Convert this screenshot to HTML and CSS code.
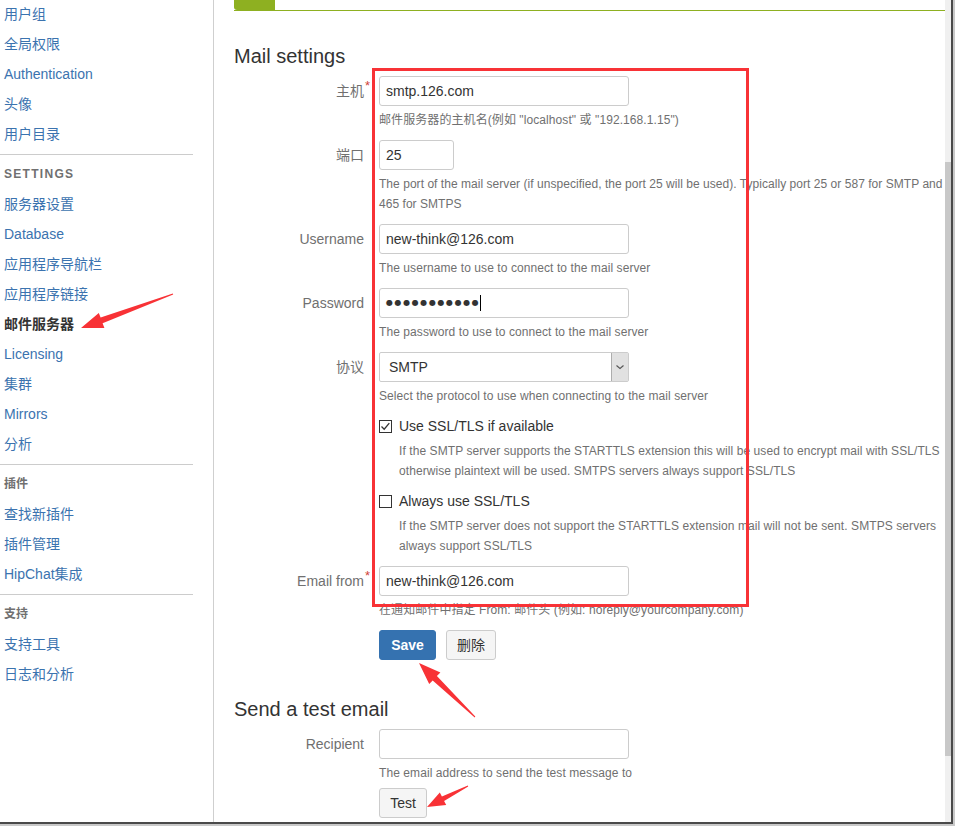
FILE: index.html
```html
<!DOCTYPE html>
<html lang="zh">
<head>
<meta charset="utf-8">
<title>Mail settings</title>
<link rel="stylesheet" href="styles.css">
</head>
<body>
<div class="shot">
  <div class="page">
    <nav class="sidebar">
      <ul class="nav first">
        <li><a class="nav-link">用户组</a></li>
        <li><a class="nav-link">全局权限</a></li>
        <li><a class="nav-link">Authentication</a></li>
        <li><a class="nav-link">头像</a></li>
        <li><a class="nav-link">用户目录</a></li>
      </ul>
      <div class="divider"></div>
      <div class="nav-heading caps">SETTINGS</div>
      <ul class="nav">
        <li><a class="nav-link">服务器设置</a></li>
        <li><a class="nav-link">Database</a></li>
        <li><a class="nav-link">应用程序导航栏</a></li>
        <li><a class="nav-link">应用程序链接</a></li>
        <li><a class="nav-link active">邮件服务器</a></li>
        <li><a class="nav-link">Licensing</a></li>
        <li><a class="nav-link">集群</a></li>
        <li><a class="nav-link">Mirrors</a></li>
        <li><a class="nav-link">分析</a></li>
      </ul>
      <div class="divider"></div>
      <div class="nav-heading">插件</div>
      <ul class="nav">
        <li><a class="nav-link">查找新插件</a></li>
        <li><a class="nav-link">插件管理</a></li>
        <li><a class="nav-link">HipChat集成</a></li>
      </ul>
      <div class="divider"></div>
      <div class="nav-heading">支持</div>
      <ul class="nav">
        <li><a class="nav-link">支持工具</a></li>
        <li><a class="nav-link">日志和分析</a></li>
      </ul>
    </nav>

    <main class="main">
      <div class="tabbar"><span class="tab"></span></div>
      <h2 class="section-title">Mail settings</h2>

      <div class="field">
        <label class="label">主机<span class="req">*</span></label>
        <div class="control">
          <div class="text">smtp.126.com</div>
          <div class="desc">邮件服务器的主机名(例如 "localhost" 或 "192.168.1.15")</div>
        </div>
      </div>

      <div class="field">
        <label class="label">端口</label>
        <div class="control">
          <div class="text short">25</div>
          <div class="desc nowrap long">The port of the mail server (if unspecified, the port 25 will be used). Typically port 25 or 587 for SMTP and<br>465 for SMTPS</div>
        </div>
      </div>

      <div class="field">
        <label class="label">Username</label>
        <div class="control">
          <div class="text">new-think@126.com</div>
          <div class="desc">The username to use to connect to the mail server</div>
        </div>
      </div>

      <div class="field">
        <label class="label">Password</label>
        <div class="control">
          <div class="text password"><span class="dots">●●●●●●●●●●●</span><span class="caret"></span></div>
          <div class="desc">The password to use to connect to the mail server</div>
        </div>
      </div>

      <div class="field">
        <label class="label">协议</label>
        <div class="control">
          <div class="select">
            <span class="select-value">SMTP</span>
            <span class="select-arrow">
              <svg width="16" height="28" viewBox="0 0 16 28"><path d="M4.5 12.5 L8 15.5 L11.5 12.5" fill="none" stroke="#555" stroke-width="1.1"/></svg>
            </span>
          </div>
          <div class="desc">Select the protocol to use when connecting to the mail server</div>
        </div>
      </div>

      <div class="check-group">
        <div class="check-line">
          <span class="checkbox"><svg width="13" height="13" viewBox="0 0 13 13"><path d="M2.5 6.5 L5.2 9.2 L10.3 3.2" fill="none" stroke="#333" stroke-width="1.3"/></svg></span>
          <span class="check-label">Use SSL/TLS if available</span>
        </div>
        <div class="check-desc nowrap">If the SMTP server supports the STARTTLS extension this will be used to encrypt mail with SSL/TLS<br>otherwise plaintext will be used. SMTPS servers always support SSL/TLS</div>
      </div>

      <div class="check-group">
        <div class="check-line">
          <span class="checkbox"></span>
          <span class="check-label">Always use SSL/TLS</span>
        </div>
        <div class="check-desc nowrap">If the SMTP server does not support the STARTTLS extension mail will not be sent. SMTPS servers<br>always support SSL/TLS</div>
      </div>

      <div class="field">
        <label class="label">Email from<span class="req">*</span></label>
        <div class="control">
          <div class="text">new-think@126.com</div>
          <div class="desc">在通知邮件中指定 From: 邮件头 (例如: noreply@yourcompany.com)</div>
        </div>
      </div>

      <div class="buttons">
        <button class="btn primary">Save</button>
        <button class="btn">删除</button>
      </div>

      <h2 class="section-title second">Send a test email</h2>

      <div class="field tight">
        <label class="label">Recipient</label>
        <div class="control">
          <div class="text"></div>
          <div class="desc">The email address to send the test message to</div>
        </div>
      </div>

      <div class="buttons">
        <button class="btn test">Test</button>
      </div>
    </main>

    <div class="scrollbar"><div class="thumb"></div></div>
  </div>

  <svg class="annotations" width="955" height="826" viewBox="0 0 955 826">
    <rect x="373.5" y="69.5" width="374" height="536" fill="none" stroke="#f83236" stroke-width="3"/>
    <polygon fill="#f83236" points="172.8,293.5 100.6,317.6 98.8,312.9 81,328 104.4,327.9 102.6,323.2 173.2,294.5"/>
    <polygon fill="#f83236" points="475.3,716.6 436.9,676.1 440.4,672.5 419,663 429.2,684.1 432.7,680.5 474.7,717.4"/>
    <polygon fill="#f83236" points="467.8,785.6 441.9,796.6 439.8,792.6 427,807 446.2,805 444.1,801 468.2,786.4"/>
  </svg>
</div>
</body>
</html>
```

FILE: styles.css
```css
html, body {
  margin: 0;
  padding: 0;
  overflow: hidden;
  background: #d9d9d9;
}

body {
  font-family: "Liberation Sans", Arial, "Noto Sans CJK SC", sans-serif;
  font-size: 14px;
  color: #333;
}

.shot {
  position: relative;
  width: 955px;
  height: 826px;
  background: #c9c9c9;
}

.page {
  display: flex;
  width: 953px;
  height: 824px;
  box-sizing: border-box;
  border-right: 2px solid #4a4a4a;
  border-bottom: 2px solid #4a4a4a;
  background: #fff;
  overflow: hidden;
}

/* Sidebar */
.sidebar {
  flex: 0 0 213px;
  border-right: 1px solid #cfcfcf;
}

.nav {
  list-style: none;
  margin: 0;
  padding: 0;
}

.nav.first {
  margin-top: -1px;
}

.nav-link {
  display: block;
  padding: 5px 4px;
  line-height: 20px;
  font-size: 14px;
  color: #3b73af;
}

.nav-link.active {
  color: #333;
  font-weight: bold;
}

.divider {
  height: 1px;
  background: #cccccc;
  margin: 5px 20px 4px 0;
}

.nav-heading {
  padding: 5px 4px;
  line-height: 20px;
  font-size: 12px;
  font-weight: bold;
  color: #707070;
}

.nav-heading.caps {
  letter-spacing: 1.3px;
}

/* Main */
.main {
  flex: 0 0 711px;
  padding-left: 20px;
}

.tabbar {
  height: 10px;
  border-bottom: 1px solid #8eb021;
}

.tab {
  display: block;
  width: 41px;
  height: 10px;
  background: #8eb021;
  border-radius: 0 0 0 3px;
}

.section-title {
  margin: 33px 0 8px;
  font-size: 20px;
  line-height: 24px;
  font-weight: normal;
  color: #333;
}

.section-title.second {
  margin-top: 37px;
}

.field {
  display: grid;
  grid-template-columns: 130px 566px;
  column-gap: 15px;
  margin-bottom: 10px;
}

.field.tight {
  margin-bottom: 5px;
}

.label {
  position: relative;
  text-align: right;
  padding-top: 5px;
  line-height: 20px;
  color: #707070;
}

.req {
  position: absolute;
  right: -6px;
  top: 3px;
  font-size: 13px;
  line-height: 13px;
  color: #d04437;
}

.text {
  box-sizing: border-box;
  width: 250px;
  height: 30px;
  border: 1px solid #cccccc;
  border-radius: 3px;
  padding: 0 6px;
  line-height: 28px;
  font-size: 14px;
  color: #333;
  background: #fff;
}

.text.short {
  width: 75px;
}

.password {
  display: flex;
  align-items: center;
}

.dots {
  font-family: "DejaVu Sans", sans-serif;
  font-size: 8px;
  letter-spacing: 1.6px;
  color: #333;
  line-height: 28px;
}

.caret {
  display: inline-block;
  width: 1px;
  height: 16px;
  background: #000;
}

.desc {
  margin-top: 4px;
  font-size: 12px;
  line-height: 20px;
  letter-spacing: 0.08px;
  color: #707070;
}

.desc.long {
  letter-spacing: 0.04px;
}

.nowrap {
  white-space: nowrap;
}

.select {
  box-sizing: border-box;
  display: flex;
  width: 250px;
  height: 30px;
  border: 1px solid #cccccc;
  border-radius: 2px;
  background: #fff;
}

.select-value {
  flex: 1;
  padding-left: 9px;
  line-height: 28px;
  font-size: 14px;
  color: #333;
}

.select-arrow {
  display: flex;
  width: 16px;
  background: #e1e1e1;
  border-left: 1px solid #adadad;
}

.check-group {
  margin-left: 145px;
  margin-bottom: 10px;
}

.check-line {
  display: flex;
  align-items: center;
  gap: 7px;
  height: 20px;
  line-height: 20px;
}

.checkbox {
  box-sizing: border-box;
  display: flex;
  width: 13px;
  height: 13px;
  border: 1px solid #333;
  background: #fff;
}

.checkbox svg {
  margin: -1px;
}

.check-label {
  font-size: 14px;
  color: #333;
}

.check-desc {
  margin-top: 5px;
  padding-left: 20px;
  font-size: 12px;
  line-height: 20px;
  letter-spacing: 0.08px;
  color: #707070;
}

.buttons {
  display: flex;
  gap: 10px;
  margin-left: 145px;
}

.btn {
  box-sizing: border-box;
  height: 30px;
  padding: 0 10px;
  border: 1px solid #cccccc;
  border-radius: 3px;
  background: #f5f5f5;
  color: #333;
  font-family: "Liberation Sans", Arial, "Noto Sans CJK SC", sans-serif;
  font-size: 14px;
  line-height: 28px;
}

.btn.primary {
  width: 57px;
  background: #3572b0;
  border-color: #3572b0;
  color: #fff;
  font-weight: bold;
}

.btn.test {
  width: 48px;
}

/* Fake window scrollbar */
.scrollbar {
  flex: 0 0 6px;
  background: #f0f0f0;
  padding-top: 162px;
}

.thumb {
  height: 594px;
  background: #c8c8c8;
}

.annotations {
  position: absolute;
  left: 0;
  top: 0;
  pointer-events: none;
}
```
